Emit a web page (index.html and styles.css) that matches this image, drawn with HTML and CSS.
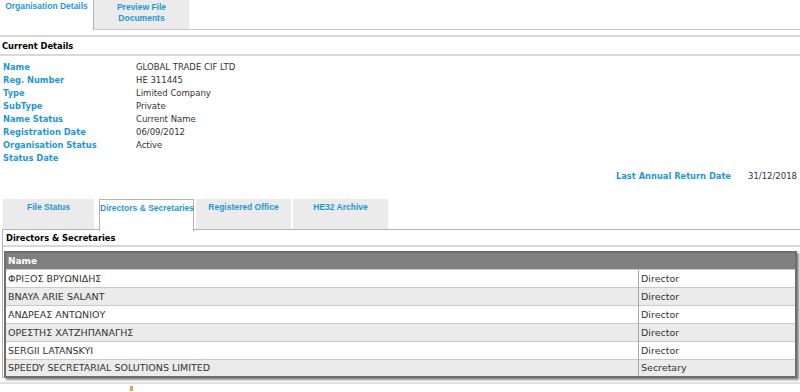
FILE: index.html
```html
<html>
<head>
  <title>Organisation Details</title>
  <meta http-equiv="Content-Type" content="text/html; charset=utf-8" />
  <link rel="stylesheet" href="styles.css">
</head>
<body>

<div class="toptabs">
  <div class="ttab active">Organisation Details</div>
  <div class="ttab">Preview File<br>Documents</div>
</div>

<div class="section">
  <div class="head">Current Details</div>
  <table class="details">
    <tr><td class="label">Name</td><td>GLOBAL TRADE CIF LTD</td></tr>
    <tr><td class="label">Reg. Number</td><td>HE 311445</td></tr>
    <tr><td class="label">Type</td><td>Limited Company</td></tr>
    <tr><td class="label">SubType</td><td>Private</td></tr>
    <tr><td class="label">Name Status</td><td>Current Name</td></tr>
    <tr><td class="label">Registration Date</td><td>06/09/2012</td></tr>
    <tr><td class="label">Organisation Status</td><td>Active</td></tr>
    <tr><td class="label">Status Date</td><td></td></tr>
  </table>
  <div class="annual">
    <span class="label">Last Annual Return Date</span>
    <span class="val">31/12/2018</span>
  </div>
</div>

<div class="subtabs">
  <div class="stab">File Status</div>
  <div class="stab active">Directors &amp; Secretaries</div>
  <div class="stab">Registered Office</div>
  <div class="stab">HE32 Archive</div>
</div>

<div class="panel">
  <div class="head">Directors &amp; Secretaries</div>
  <table class="grid">
    <tr class="hdr"><td class="c1">Name</td><td class="c2"></td></tr>
    <tr><td>ΦΡΙΞΟΣ ΒΡΥΩΝΙΔΗΣ</td><td>Director</td></tr>
    <tr class="alt"><td>BNAYA ARIE SALANT</td><td>Director</td></tr>
    <tr><td>ΑΝΔΡΕΑΣ ΑΝΤΩΝΙΟΥ</td><td>Director</td></tr>
    <tr class="alt"><td>ΟΡΕΣΤΗΣ ΧΑΤΖΗΠΑΝΑΓΗΣ</td><td>Director</td></tr>
    <tr><td>SERGII LATANSKYI</td><td>Director</td></tr>
    <tr class="alt"><td>SPEEDY SECRETARIAL SOLUTIONS LIMITED</td><td>Secretary</td></tr>
  </table>
</div>

<div class="footer"><span class="logo"></span></div>

</body>
</html>
```

FILE: styles.css
```css
html, body {
  background: #fff;
  color: #333;
  font: 8.5px "DejaVu Sans", Verdana, sans-serif;
  margin: 0px;
  padding: 0px;
}
table { font: 8.5px "DejaVu Sans", Verdana, sans-serif; border-collapse: collapse; }

.label { color: #1f97d4; font-weight: bold; font-size: 8.3px; }

/* top tabs */
.toptabs {
  display: flex;
  border-bottom: 1px solid #c8c8c8;
  height: 29px;
}
.ttab {
  width: 96px;
  text-align: center;
  font: bold 8.5px "Liberation Sans", Arial, sans-serif;
  color: #1f97d4;
  padding-top: 2px;
  line-height: 11px;
  background: #ebebeb;
  border-left: 1px solid #b4b4b4;
  box-sizing: border-box;
  white-space: nowrap;
}
.ttab.active {
  width: 93px;
  background: #fff;
  border-left: 0;
  height: 30px;
  padding-top: 1px;
}

.section { margin-top: 5px; border-top: 2px solid #d8d8d8; }
.head {
  font-weight: bold;
  color: #000;
  font-size: 8.3px;
  line-height: 12px;
  padding: 3px 2px 2px;
  border-bottom: 2px solid #d8d8d8;
}

.details { margin-top: 4px; margin-left: 1px; }
.details td { padding: 0 2px; height: 13px; }
.details td.label { width: 129px; }

.annual {
  display: flex;
  justify-content: flex-end;
  gap: 17px;
  margin-top: 6px;
  padding-right: 3px;
  line-height: 13px;
}

/* lower tabs */
.subtabs {
  display: flex;
  gap: 2px;
  margin: 16px 0 0 3px;
  height: 30px;
}
.stab {
  width: 95px;
  background: #ebebeb;
  color: #1f97d4;
  font: bold 8.5px "Liberation Sans", Arial, sans-serif;
  text-align: center;
  padding-top: 3px;
  box-sizing: border-box;
  white-space: nowrap;
}
.stab:first-child { width: 91px; margin-right: 3px; }
.stab.active {
  background: #fff;
  border: 1px solid #b4b4b4;
  border-bottom: 0;
  height: 32px;
  position: relative;
  z-index: 1;
}

.panel {
  margin-left: 2px;
  border-left: 1px solid #b4b4b4;
  border-top: 1px solid #b4b4b4;
}
.panel .head { padding: 2px 3px 1px; }

.grid {
  width: 793px;
  margin: 4px 0 0 1px;
  border: 2px solid #6e6e6e;
  box-shadow: 2px 2px 2px #888;
  font-size: 9.5px;
}
.grid td {
  height: 18px;
  padding: 0 2px;
  border-top: 1px solid #c8c8c8;
}
.grid td + td { border-left: 1px solid #a8a8a8; width: 152px; }
.grid tr.alt td { background: #ebebeb; }
.grid tr.hdr td {
  background: #808080;
  color: #fff;
  font-weight: bold;
  font-size: 9px;
  height: 17px;
  border: 0;
}

.footer {
  margin-top: 4px;
  border-top: 2px solid #e0e0e0;
  height: 12px;
}
.logo {
  display: block;
  margin: 2px 0 0 130px;
  width: 3px;
  height: 5px;
  background: #f0a040;
}
```
